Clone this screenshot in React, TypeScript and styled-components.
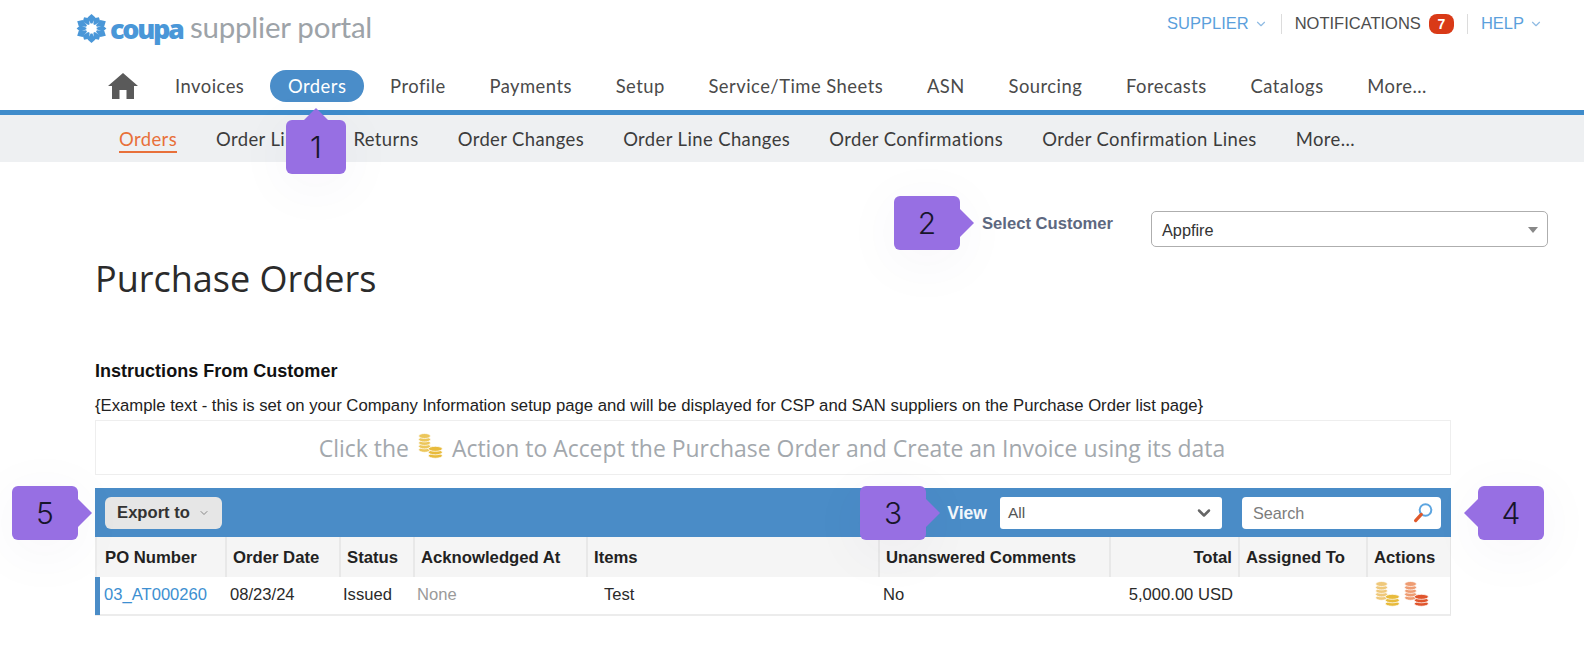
import React from "react";
import styled, { createGlobalStyle } from "styled-components";
import { ChevronDown } from "lucide-react";

const Global = createGlobalStyle`
  html, body { margin: 0; padding: 0; background: #fff; }
  body { font-family: "Liberation Sans", Arial, sans-serif; }
`;

const Page = styled.div`
  position: relative;
  width: 1584px;
  height: 658px;
  overflow: hidden;
  background: #fff;
`;

const TopBar = styled.header`
  height: 60px;
  display: flex;
  align-items: flex-start;
  justify-content: space-between;
  padding: 0 41px 0 75px;
`;

const Logo = styled.div`
  display: flex;
  align-items: center;
  height: 56px;
`;

const LogoMark = styled.svg`
  width: 33px;
  height: 29px;
  margin-right: 2px;
`;

const LogoCoupa = styled.span`
  font-family: "Open Sans", sans-serif;
  font-weight: 800;
  font-size: 27px;
  letter-spacing: -2.3px;
  color: #4a97d8;
  margin-right: 7.5px;
  line-height: 1;
`;

const LogoPortal = styled.span`
  font-family: "Lato", sans-serif;
  font-weight: 400;
  font-size: 29.5px;
  letter-spacing: -0.25px;
  color: #9da3a8;
  line-height: 1;
  margin-bottom: 3px;
`;

const TopLinks = styled.div`
  display: flex;
  align-items: center;
  height: 47px;
  font-size: 16.5px;
`;

const TopLink = styled.span<{ $dark?: boolean }>`
  display: inline-flex;
  align-items: center;
  gap: 5px;
  color: ${(p) => (p.$dark ? "#4d4d4d" : "#5b9fdc")};
`;

const TopDivider = styled.span`
  width: 1px;
  height: 20px;
  background: #dcdcdc;
  margin: 0 13px;
`;

const Badge = styled.span`
  display: inline-flex;
  align-items: center;
  justify-content: center;
  width: 25px;
  height: 20px;
  margin-left: 3px;
  border-radius: 8px;
  background: #d93a17;
  color: #fff;
  font-size: 14px;
  font-weight: 700;
`;

const MainNav = styled.nav`
  height: 50px;
  display: flex;
  align-items: center;
  padding: 2px 0 0 108px;
  box-sizing: border-box;
  font-family: "Lato", sans-serif;
`;

const HomeIcon = styled.svg`
  width: 30px;
  height: 26px;
  margin-right: 19px;
`;

const NavItem = styled.a<{ $active?: boolean }>`
  display: inline-flex;
  align-items: center;
  height: 32px;
  padding: 0 18px;
  margin-right: 7.7px;
  border-radius: 16px;
  font-size: 18.4px;
  letter-spacing: 0.48px;
  color: ${(p) => (p.$active ? "#fff" : "#4a4a4a")};
  background: ${(p) => (p.$active ? "#4a8dc9" : "transparent")};
  white-space: nowrap;
`;

const SubNav = styled.nav`
  height: 52px;
  box-sizing: border-box;
  border-top: 5px solid #3f8ccb;
  background: #eef0f2;
  display: flex;
  align-items: center;
  padding-left: 119px;
  gap: 39px;
  font-family: "Lato", sans-serif;
`;

const SubItem = styled.a<{ $active?: boolean }>`
  font-size: 18.45px;
  letter-spacing: 0.4px;
  line-height: 24px;
  white-space: nowrap;
  color: ${(p) => (p.$active ? "#e8703a" : "#3c3c3c")};
  border-bottom: 2px solid ${(p) => (p.$active ? "#e8703a" : "transparent")};
  margin-top: 2px;
`;

const Content = styled.main`
  padding: 49px 36px 0 95px;
`;

const CustomerRow = styled.div`
  display: flex;
  justify-content: flex-end;
  align-items: flex-start;
  height: 36px;
`;

const CustomerLabel = styled.span`
  font-size: 16.6px;
  font-weight: 700;
  color: #5d6880;
  line-height: 25px;
  margin-right: 38px;
`;

const CustomerSelect = styled.div`
  width: 397px;
  height: 36px;
  box-sizing: border-box;
  border: 1px solid #aeaeae;
  border-radius: 5px;
  display: flex;
  align-items: center;
  justify-content: space-between;
  padding: 2px 9px 0 10px;
  font-size: 16.3px;
  color: #333;
`;

const Caret = styled.span`
  width: 0;
  height: 0;
  border-left: 5px solid transparent;
  border-right: 5px solid transparent;
  border-top: 6px solid #888;
`;

const Title = styled.h1`
  margin: 10px 0 0;
  font-family: "Open Sans", sans-serif;
  font-weight: 400;
  font-size: 36px;
  line-height: 44px;
  color: #2b2b2b;
`;

const Body = styled.div`
  width: 1356px;
`;

const InstructionsHead = styled.h2`
  margin: 60px 0 0;
  font-size: 18.05px;
  line-height: 20px;
  font-weight: 700;
  color: #111;
`;

const InstructionsText = styled.p`
  margin: 15px 0 0;
  font-size: 16.7px;
  line-height: 20px;
  color: #222;
  white-space: nowrap;
`;

const Banner = styled.div`
  margin-top: 4px;
  height: 55px;
  box-sizing: border-box;
  border: 1.5px solid #eeeeee;
  display: flex;
  align-items: center;
  justify-content: center;
  gap: 9px;
  padding-right: 2px;
  font-family: "Open Sans", sans-serif;
  font-size: 22.95px;
  color: #a3a8ad;
  white-space: nowrap;
`;

const Toolbar = styled.div`
  margin-top: 13px;
  height: 49px;
  box-sizing: border-box;
  padding: 1px 10px 0;
  background: #4a8cc7;
  display: flex;
  align-items: center;
`;

const ExportButton = styled.button`
  width: 117px;
  height: 32px;
  border: 0;
  padding: 0;
  border-radius: 6px;
  background: #e6e6e6;
  display: flex;
  align-items: center;
  justify-content: center;
  gap: 8px;
  font: 700 16.6px "Liberation Sans", Arial, sans-serif;
  color: #333;
`;

const ViewLabel = styled.span`
  margin-left: auto;
  margin-right: 13px;
  font-size: 17.6px;
  font-weight: 700;
  color: #f2f7fc;
`;

const ViewSelect = styled.div`
  width: 222px;
  height: 32px;
  box-sizing: border-box;
  border-radius: 3px;
  background: #fff;
  display: flex;
  align-items: center;
  justify-content: space-between;
  padding: 0 8px;
  font-size: 15.5px;
  color: #555;
`;

const SearchBox = styled.div`
  width: 199px;
  height: 32px;
  margin-left: 20px;
  box-sizing: border-box;
  border-radius: 4px;
  background: #fff;
  display: flex;
  align-items: center;
  justify-content: space-between;
  padding: 0 7px 0 11px;
  font-size: 16.2px;
  color: #7c7c7c;
`;

const columns = "130px 114px 74px 173px 292px 231px 129px 128px 1fr";

const HeadRow = styled.div`
  display: grid;
  grid-template-columns: ${columns};
  height: 40px;
  background: #f5f5f5;
  border-left: 2px solid #ececec;
  border-right: 1px solid #e6e6e6;
  box-sizing: border-box;
`;

const HeadCell = styled.div<{ $right?: boolean }>`
  display: flex;
  align-items: center;
  justify-content: ${(p) => (p.$right ? "flex-end" : "flex-start")};
  padding: ${(p) => (p.$right ? "1px 6px 0 0" : "1px 0 0 6px")};
  font-size: 16.7px;
  font-weight: 700;
  color: #222;
  border-right: 2px solid #e8e8e8;
  box-sizing: border-box;
  white-space: nowrap;
  &:first-child { padding-left: 10px; margin-left: -2px; }
  &:last-child { border-right: 0; }
`;

const DataRow = styled.div`
  display: grid;
  grid-template-columns: ${columns};
  height: 39px;
  padding-bottom: 1px;
  box-sizing: border-box;
  border-bottom: 2px solid #ececec;
  border-right: 1px solid #e6e6e6;
  position: relative;
  &::before {
    content: "";
    position: absolute;
    left: 0;
    top: 0;
    bottom: -1px;
    width: 5px;
    background: #4a8cc7;
  }
`;

const Cell = styled.div<{ $right?: boolean; $muted?: boolean; $link?: boolean; $indent?: number }>`
  display: flex;
  align-items: center;
  justify-content: ${(p) => (p.$right ? "flex-end" : "flex-start")};
  padding: ${(p) => (p.$right ? "0 5px 0 0" : `0 0 0 ${p.$indent ?? 4}px`)};
  font-size: 16.6px;
  white-space: nowrap;
  color: ${(p) => (p.$link ? "#3d8fd1" : p.$muted ? "#9a9a9a" : "#2a2a2a")};
`;

const Actions = styled.div`
  display: flex;
  align-items: center;
  gap: 4px;
  padding-left: 9px;
`;

const CoinIcon = styled.svg`
  width: 25px;
  height: 27px;
  margin-top: -4px;
`;

const Callout = styled.div<{ $left: number; $top: number; $side: "top" | "left" | "right" }>`
  position: absolute;
  left: ${(p) => p.$left}px;
  top: ${(p) => p.$top}px;
  width: ${(p) => (p.$side === "top" ? 60 : 66)}px;
  height: 54px;
  border-radius: 6px;
  background: #976fe3;
  box-shadow: 0 10px 60px rgba(60, 40, 110, 0.05);
  display: flex;
  align-items: center;
  justify-content: center;
  font-family: "Inter", sans-serif;
  font-weight: 300;
  font-size: 30px;
  color: #17152b;
  z-index: 5;
  &::after {
    content: "";
    position: absolute;
    width: 0;
    height: 0;
    ${(p) =>
      p.$side === "top"
        ? `left: 17px; top: -12px; border-left: 13px solid transparent; border-right: 13px solid transparent; border-bottom: 13px solid #976fe3;`
        : p.$side === "right"
        ? `right: -14px; top: 12px; border-top: 15px solid transparent; border-bottom: 15px solid transparent; border-left: 15px solid #976fe3;`
        : `left: -14px; top: 12px; border-top: 15px solid transparent; border-bottom: 15px solid transparent; border-right: 15px solid #976fe3;`}
  }
`;

const Star = () => (
  <LogoMark viewBox="-15 -15 30 30" preserveAspectRatio="none">
    {Array.from({ length: 12 }, (_, i) => (
      <path
        key={i}
        d="M-0.8 -5.2 L-3.6 -11.4 L0 -15 L3.6 -11.4 L0.8 -5.2 Z"
        fill="#4a97d8"
        transform={`rotate(${i * 30}) scale(${i % 2 ? 0.9 : 1})`}
      />
    ))}
  </LogoMark>
);

const Home = () => (
  <HomeIcon viewBox="0 0 30 26">
    <path
      d="M15 0 L30 13 L26 13 L26 26 L18.5 26 L18.5 17 L11.5 17 L11.5 26 L4 26 L4 13 L0 13 Z"
      fill="#5a5a5a"
    />
  </HomeIcon>
);

const CoinStack = ({ x, y, n, color, w = 8 }: { x: number; y: number; n: number; color: string; w?: number }) => (
  <g>
    {Array.from({ length: n }, (_, i) => (
      <ellipse key={i} cx={x} cy={y - i * 3.2} rx={w} ry={2.3} fill={color} stroke="#fff" strokeWidth={0.7} />
    ))}
  </g>
);

const Coins = ({ tall, short }: { tall: string; short: string }) => (
  <CoinIcon viewBox="2 0 23 25">
    <CoinStack x={8} y={16.5} n={5} color={tall} w={5.5} />
    <CoinStack x={18} y={22} n={3} color={short} w={6.5} />
  </CoinIcon>
);

const Magnifier = () => (
  <svg width="22" height="22" viewBox="0 0 22 22">
    <circle cx="13.5" cy="8" r="5.8" fill="none" stroke="#5da5e0" strokeWidth="2" />
    <path d="M9.3 12.4 L3.6 18.6" stroke="#e0582a" strokeWidth="3.2" strokeLinecap="round" />
  </svg>
);

const topNav = ["Payments", "Setup", "Service/Time Sheets", "ASN", "Sourcing", "Forecasts", "Catalogs", "More..."];
const subNav = [
  "Order Lines",
  "Returns",
  "Order Changes",
  "Order Line Changes",
  "Order Confirmations",
  "Order Confirmation Lines",
  "More...",
];
const headers = ["PO Number", "Order Date", "Status", "Acknowledged At", "Items", "Unanswered Comments"];

export default function App() {
  return (
    <Page>
      <Global />
      <TopBar>
        <Logo>
          <Star />
          <LogoCoupa>coupa</LogoCoupa>
          <LogoPortal>supplier portal</LogoPortal>
        </Logo>
        <TopLinks>
          <TopLink>
            SUPPLIER <ChevronDown size={14} color="#8fbbe3" />
          </TopLink>
          <TopDivider />
          <TopLink $dark>
            NOTIFICATIONS <Badge>7</Badge>
          </TopLink>
          <TopDivider />
          <TopLink>
            HELP <ChevronDown size={14} color="#8fbbe3" />
          </TopLink>
        </TopLinks>
      </TopBar>

      <MainNav>
        <Home />
        <NavItem>Invoices</NavItem>
        <NavItem $active>Orders</NavItem>
        <NavItem>Profile</NavItem>
        {topNav.map((t) => (
          <NavItem key={t}>{t}</NavItem>
        ))}
      </MainNav>

      <SubNav>
        <SubItem $active>Orders</SubItem>
        {subNav.map((t) => (
          <SubItem key={t}>{t}</SubItem>
        ))}
      </SubNav>

      <Content>
        <CustomerRow>
          <CustomerLabel>Select Customer</CustomerLabel>
          <CustomerSelect>
            Appfire
            <Caret />
          </CustomerSelect>
        </CustomerRow>
        <Title>Purchase Orders</Title>
        <Body>
          <InstructionsHead>Instructions From Customer</InstructionsHead>
          <InstructionsText>
            {"{Example text - this is set on your Company Information setup page and will be displayed for CSP and SAN suppliers on the Purchase Order list page}"}
          </InstructionsText>
          <Banner>
            Click the
            <Coins tall="#ecc65a" short="#e8bb3c" />
            Action to Accept the Purchase Order and Create an Invoice using its data
          </Banner>
          <Toolbar>
            <ExportButton>
              Export to <ChevronDown size={12} color="#888" />
            </ExportButton>
            <ViewLabel>View</ViewLabel>
            <ViewSelect>
              All
              <ChevronDown size={20} strokeWidth={3} color="#666" />
            </ViewSelect>
            <SearchBox>
              Search
              <Magnifier />
            </SearchBox>
          </Toolbar>
          <HeadRow>
            {headers.map((h) => (
              <HeadCell key={h}>{h}</HeadCell>
            ))}
            <HeadCell $right>Total</HeadCell>
            <HeadCell>Assigned To</HeadCell>
            <HeadCell>Actions</HeadCell>
          </HeadRow>
          <DataRow>
            <Cell $link $indent={9}>03_AT000260</Cell>
            <Cell $indent={5}>08/23/24</Cell>
            <Cell $indent={4}>Issued</Cell>
            <Cell $muted $indent={4}>None</Cell>
            <Cell $indent={18}>Test</Cell>
            <Cell $indent={5}>No</Cell>
            <Cell $right>5,000.00 USD</Cell>
            <Cell />
            <Actions>
              <Coins tall="#efc87a" short="#e8bb3c" />
              <Coins tall="#ee9c72" short="#e0552c" />
            </Actions>
          </DataRow>
        </Body>
      </Content>

      <Callout $left={286} $top={120} $side="top">1</Callout>
      <Callout $left={894} $top={196} $side="right">2</Callout>
      <Callout $left={860} $top={486} $side="right">3</Callout>
      <Callout $left={1478} $top={486} $side="left">4</Callout>
      <Callout $left={12} $top={486} $side="right">5</Callout>
    </Page>
  );
}
